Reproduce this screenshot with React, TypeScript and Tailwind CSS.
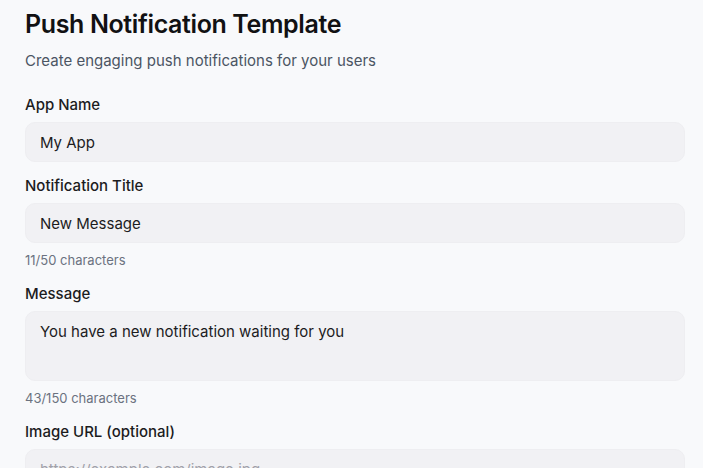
import { useState } from 'react';

const font = { fontFamily: 'Inter, "Noto Sans", sans-serif' };

function Field({ label, children }: { label: string; children: React.ReactNode }) {
  return (
    <div className="flex flex-col">
      <label className="mb-[7px] text-[15px] leading-5 font-medium text-[#1c1c1e]">{label}</label>
      {children}
    </div>
  );
}

const inputCls =
  'w-full rounded-[10px] border border-[#eeeef1] bg-[#f1f1f4] px-[14px] text-[15px] text-[#1c1c1e] placeholder:text-[#a1a1aa] outline-none';

export default function App() {
  const [appName, setAppName] = useState('My App');
  const [title, setTitle] = useState('New Message');
  const [message, setMessage] = useState('You have a new notification waiting for you');
  const [imageUrl, setImageUrl] = useState('');

  return (
    <div className="min-h-screen bg-[#f8f9fb]" style={font}>
      <div className="px-[25px] pt-[6px] pr-[18px]">
        <h1 className="text-[25px] leading-9 font-semibold tracking-[-0.015em] text-[#111113]">
          Push Notification Template
        </h1>
        <p className="mt-[9px] text-[15px] leading-5 text-[#4b5563]">
          Create engaging push notifications for your users
        </p>

        <div className="mt-[24px] flex flex-col gap-[14px]">
          <Field label="App Name">
            <input className={`${inputCls} h-[40px]`} value={appName} onChange={(e) => setAppName(e.target.value)} />
          </Field>

          <Field label="Notification Title">
            <input className={`${inputCls} h-[40px]`} value={title} onChange={(e) => setTitle(e.target.value)} />
            <span className="mt-[8px] mb-[1px] text-[13px] leading-[18px] text-[#6b7280]">
              {title.length}/50 characters
            </span>
          </Field>

          <Field label="Message">
            <textarea
              className={`${inputCls} h-[70px] resize-none py-[9px] leading-[22px]`}
              value={message}
              onChange={(e) => setMessage(e.target.value)}
            />
            <span className="mt-[8px] mb-[1px] text-[13px] leading-[18px] text-[#6b7280]">
              {message.length}/150 characters
            </span>
          </Field>

          <Field label="Image URL (optional)">
            <input
              className={`${inputCls} h-[40px]`}
              placeholder="https://example.com/image.jpg"
              value={imageUrl}
              onChange={(e) => setImageUrl(e.target.value)}
            />
          </Field>
        </div>
      </div>
    </div>
  );
}
